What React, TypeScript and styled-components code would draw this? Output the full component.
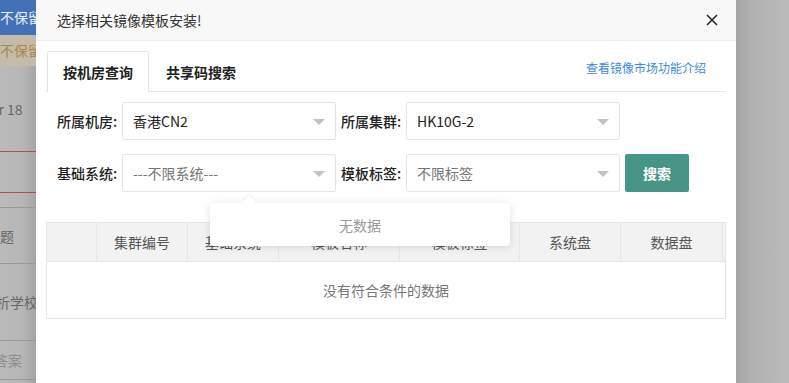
import { createGlobalStyle } from 'styled-components'
import styled from 'styled-components'

const Global = createGlobalStyle`
  html, body {
    margin: 0;
    padding: 0;
    background: #b5b5b5;
    font-family: "Noto Sans CJK SC", "Liberation Sans", sans-serif;
    overflow: hidden;
  }
`

const Screen = styled.div`
  display: flex;
  width: 789px;
  height: 383px;
  overflow: hidden;
`

const BackStrip = styled.div`
  width: 36px;
  flex-shrink: 0;
  display: flex;
  flex-direction: column;
  background: linear-gradient(to right, #bababa 0%, #b7b7b7 60%, #a6a6a6 100%);
  overflow: hidden;
  white-space: nowrap;
  font-size: 14px;
  color: #6a6a6a;
`

const BackRow = styled.div<{ $h: number; $bg?: string; $color?: string; $line?: string }>`
  height: ${p => p.$h}px;
  flex-shrink: 0;
  display: flex;
  align-items: center;
  background: ${p => p.$bg || 'transparent'};
  color: ${p => p.$color || '#666'};
  border-bottom: 1px solid ${p => p.$line || 'transparent'};
  box-sizing: border-box;
`

const BackText = styled.span<{ $shift?: number }>`
  margin-left: ${p => p.$shift || 0}px;
  flex-shrink: 0;
`

const Modal = styled.div`
  width: 700px;
  flex-shrink: 0;
  background: #fff;
  display: flex;
  flex-direction: column;
`

const Header = styled.div`
  height: 41px;
  box-sizing: border-box;
  background: #f8f8f8;
  border-bottom: 1px solid #eee;
  display: flex;
  align-items: center;
  justify-content: space-between;
  padding: 0 17px 0 21px;
`

const Title = styled.div`
  font-size: 14px;
  color: #333;
`

const Close = styled.div`
  width: 14px;
  height: 14px;
  display: flex;
`

const Body = styled.div`
  padding: 10px 10px 0 10px;
  position: relative;
`

const TabBar = styled.div`
  display: flex;
  align-items: flex-end;
  height: 41px;
  border-bottom: 1px solid #e6e6e6;
  box-sizing: border-box;
`

const Tab = styled.div<{ $active?: boolean }>`
  box-sizing: border-box;
  padding: 0 15px;
  margin-left: 1px;
  display: flex;
  align-items: center;
  font-size: 14px;
  font-weight: 600;
  color: #222;
  background: #fff;
  border: 1px solid ${p => (p.$active ? '#e6e6e6' : 'transparent')};
  border-bottom: none;
  margin-bottom: ${p => (p.$active ? '-1px' : '0')};
  height: ${p => (p.$active ? '41px' : '40px')};
  border-radius: 2px 2px 0 0;
`

const TabLink = styled.a`
  margin-left: auto;
  align-self: center;
  margin-bottom: 8px;
  margin-right: 20px;
  font-size: 12px;
  color: #3b8be0;
  text-decoration: none;
`

const Form = styled.div`
  display: flex;
  flex-direction: column;
  gap: 14px;
  padding: 10px 0 0 11px;
`

const FormRow = styled.div`
  display: flex;
  align-items: center;
`

const Label = styled.span`
  width: 65px;
  font-size: 14px;
  font-weight: 500;
  color: #222;
  flex-shrink: 0;
`

const Select = styled.div<{ $muted?: boolean }>`
  width: 214px;
  height: 38px;
  box-sizing: border-box;
  border: 1px solid #e6e6e6;
  border-radius: 2px;
  display: flex;
  align-items: center;
  justify-content: space-between;
  padding: 0 10px;
  margin-right: 5px;
  font-size: 14px;
  color: ${p => (p.$muted ? '#757575' : '#222')};
`

const Caret = styled.span`
  width: 0;
  height: 0;
  border-left: 6px solid transparent;
  border-right: 6px solid transparent;
  border-top: 6px solid #c2c2c2;
  margin-top: 2px;
`

const SearchButton = styled.button`
  width: 64px;
  height: 38px;
  border: none;
  border-radius: 2px;
  background: #479587;
  color: #fff;
  font-size: 14px;
  font-weight: 700;
  font-family: inherit;
`

const Table = styled.div`
  margin-top: 30px;
  border: 1px solid #e6e6e6;
`

const HeadRow = styled.div`
  display: flex;
  height: 38px;
  background: #f2f2f2;
  border-bottom: 1px solid #e6e6e6;
  overflow: hidden;
`

const HeadCell = styled.div<{ $w: number }>`
  width: ${p => p.$w}px;
  flex-shrink: 0;
  border-right: 1px solid #e6e6e6;
  display: flex;
  align-items: center;
  justify-content: center;
  font-size: 14px;
  color: #555;
  box-sizing: border-box;
`

const Empty = styled.div`
  height: 56px;
  display: flex;
  align-items: center;
  justify-content: center;
  font-size: 14px;
  color: #777;
`

const Popup = styled.div`
  position: absolute;
  left: 174px;
  top: 162px;
  width: 300px;
  height: 43px;
  background: #fff;
  border-radius: 4px;
  box-shadow: 0 1px 8px rgba(0, 0, 0, 0.12);
  display: flex;
  align-items: center;
  justify-content: center;
  font-size: 14px;
  color: #999;

  &::before {
    content: '';
    position: absolute;
    left: 34px;
    top: -6px;
    width: 10px;
    height: 10px;
    background: #fff;
    transform: rotate(45deg);
    box-shadow: -1px -1px 2px rgba(0, 0, 0, 0.06);
  }
`

const RightStrip = styled.div`
  flex: 1;
  background: linear-gradient(to right, #a5a5a5 0%, #b3b3b3 40%, #bababa 100%);
`

const columns: [string, number][] = [
  ['', 50],
  ['集群编号', 91],
  ['基础系统', 91],
  ['模板名称', 121],
  ['模板标签', 120],
  ['系统盘', 101],
  ['数据盘', 102],
  ['', 40],
]

export default function App() {
  return (
    <Screen>
      <Global />
      <BackStrip>
        <BackRow $h={35} $bg="#4470b8" $color="#e8eef8"><BackText>不保留</BackText></BackRow>
        <BackRow $h={31} $bg="#c5bba9" $color="#a7874e"><BackText>不保留</BackText></BackRow>
        <BackRow $h={86} $line="#b74a4a"><BackText $shift={-9}>Fr 18</BackText></BackRow>
        <BackRow $h={41} $line="#b74a4a" />
        <BackRow $h={15} $line="#999" />
        <BackRow $h={56} $line="#999"><BackText $shift={-14}>问题</BackText></BackRow>
        <BackRow $h={77} $line="#999"><BackText $shift={-4}>析学校的</BackText></BackRow>
        <BackRow $h={39} $color="#8c8c8c" $line="#999"><BackText $shift={-6}>答案</BackText></BackRow>
      </BackStrip>
      <Modal>
        <Header>
          <Title>选择相关镜像模板安装!</Title>
          <Close>
            <svg width="14" height="14" viewBox="0 0 14 14">
              <path d="M2 2 L12 12 M12 2 L2 12" stroke="#222" strokeWidth="1.5" fill="none" />
            </svg>
          </Close>
        </Header>
        <Body>
          <TabBar>
            <Tab $active>按机房查询</Tab>
            <Tab>共享码搜索</Tab>
            <TabLink>查看镜像市场功能介绍</TabLink>
          </TabBar>
          <Form>
            <FormRow>
              <Label>所属机房:</Label>
              <Select>香港CN2<Caret /></Select>
              <Label>所属集群:</Label>
              <Select>HK10G-2<Caret /></Select>
            </FormRow>
            <FormRow>
              <Label>基础系统:</Label>
              <Select $muted>---不限系统---<Caret /></Select>
              <Label>模板标签:</Label>
              <Select $muted>不限标签<Caret /></Select>
              <SearchButton>搜索</SearchButton>
            </FormRow>
          </Form>
          <Table>
            <HeadRow>
              {columns.map(([name, w], i) => (
                <HeadCell key={i} $w={w}>{name}</HeadCell>
              ))}
            </HeadRow>
            <Empty>没有符合条件的数据</Empty>
          </Table>
          <Popup>无数据</Popup>
        </Body>
      </Modal>
      <RightStrip />
    </Screen>
  )
}
